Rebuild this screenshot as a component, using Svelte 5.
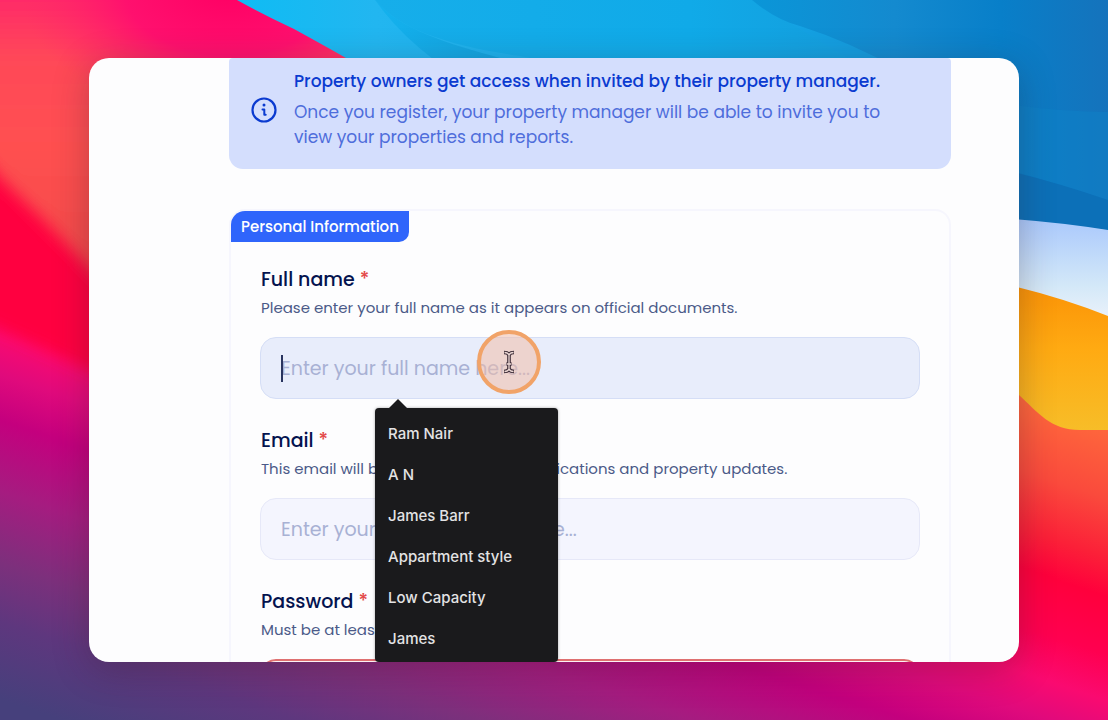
<script lang="ts">
	type Field = {
		id: string;
		type: string;
		label: string;
		hint: string;
		placeholder: string;
		invalid?: boolean;
	};

	const fields: Field[] = [
		{
			id: 'full-name',
			type: 'text',
			label: 'Full name',
			hint: 'Please enter your full name as it appears on official documents.',
			placeholder: 'Enter your full name here...'
		},
		{
			id: 'email',
			type: 'email',
			label: 'Email',
			hint: 'This email will be used for account notifications and property updates.',
			placeholder: 'Enter your email address here...'
		},
		{
			id: 'password',
			type: 'password',
			label: 'Password',
			hint: 'Must be at least 8 characters',
			placeholder: 'Enter your password here...',
			invalid: true
		}
	];

	const suggestions = ['Ram Nair', 'A N', 'James Barr', 'Appartment style', 'Low Capacity', 'James'];

	let values = $state<Record<string, string>>({ 'full-name': '', email: '', password: '' });
	let active = $state('full-name');

	function pick(name: string) {
		values['full-name'] = name;
		active = '';
	}
</script>

<div class="stage">
	<svg class="wallpaper" viewBox="0 0 1108 720" preserveAspectRatio="none" aria-hidden="true">
		<defs>
			<linearGradient id="base" gradientUnits="userSpaceOnUse" x1="0" y1="50" x2="-193" y2="636">
				<stop offset="0" stop-color="#ff6c3c" />
				<stop offset="0.13" stop-color="#fa4a3c" />
				<stop offset="0.22" stop-color="#fb2038" />
				<stop offset="0.28" stop-color="#ff003c" />
				<stop offset="0.37" stop-color="#ff0050" />
				<stop offset="0.44" stop-color="#fa0a70" />
				<stop offset="0.5" stop-color="#e00a7c" />
				<stop offset="0.57" stop-color="#c4007e" />
				<stop offset="0.68" stop-color="#a51c80" />
				<stop offset="0.79" stop-color="#7c307c" />
				<stop offset="0.88" stop-color="#5e377e" />
				<stop offset="1" stop-color="#46407c" />
			</linearGradient>
			<linearGradient id="coral" gradientUnits="userSpaceOnUse" x1="0" y1="0" x2="0" y2="290">
				<stop offset="0" stop-color="#ff2a68" />
				<stop offset="0.2" stop-color="#ff4858" />
				<stop offset="0.5" stop-color="#ff5050" />
				<stop offset="1" stop-color="#f04848" />
			</linearGradient>
			<radialGradient id="pink" gradientUnits="userSpaceOnUse" cx="0" cy="0" r="1" gradientTransform="translate(230 -10) scale(210 130)">
				<stop offset="0" stop-color="#ff0064" />
				<stop offset="0.5" stop-color="#ff106e" />
				<stop offset="1" stop-color="#ff2a68" stop-opacity="0" />
			</radialGradient>
			<linearGradient id="blue" x1="0" y1="0" x2="1" y2="0">
				<stop offset="0" stop-color="#0fbcf4" />
				<stop offset="0.16" stop-color="#22b6f0" />
				<stop offset="0.6" stop-color="#14a6e6" />
				<stop offset="1" stop-color="#1480c8" />
			</linearGradient>
			<linearGradient id="blue-mid" x1="0" y1="0" x2="1" y2="0">
				<stop offset="0" stop-color="#16aeea" />
				<stop offset="0.6" stop-color="#10aae8" />
				<stop offset="1" stop-color="#169ada" />
			</linearGradient>
			<linearGradient id="blue-fold" x1="0" y1="0" x2="1" y2="0">
				<stop offset="0" stop-color="#14b2ee" />
				<stop offset="0.6" stop-color="#129cd8" />
				<stop offset="1" stop-color="#1098d6" />
			</linearGradient>
			<linearGradient id="blue-deep" x1="0" y1="0" x2="1" y2="0">
				<stop offset="0" stop-color="#0a96d8" />
				<stop offset="0.4" stop-color="#148acf" />
				<stop offset="0.7" stop-color="#087fc9" />
				<stop offset="1" stop-color="#1573bc" />
			</linearGradient>
			<linearGradient id="sky" x1="0" y1="0" x2="0" y2="1">
				<stop offset="0" stop-color="#a9c8fc" />
				<stop offset="0.6" stop-color="#d3e8f8" />
				<stop offset="1" stop-color="#f2f5fb" />
			</linearGradient>
			<linearGradient id="amber" x1="0" y1="0" x2="0" y2="1">
				<stop offset="0" stop-color="#fb9206" />
				<stop offset="0.45" stop-color="#ffaa12" />
				<stop offset="1" stop-color="#f7bd28" />
			</linearGradient>
			<filter id="soft" x="-50%" y="-50%" width="200%" height="200%">
				<feGaussianBlur stdDeviation="8" />
			</filter>
		</defs>

		<rect width="1108" height="720" fill="url(#base)" />
		<path d="M-60 100 H60 L200 300 V420 L89 370 L-60 300Z" fill="#ff0040" filter="url(#soft)" />
		<path d="M-100 -100 H500 V330 H150 L89 268 L45 222 L0 178 Q-40 130 -100 60Z" fill="url(#coral)" filter="url(#soft)" />
		<rect width="460" height="130" fill="url(#pink)" />

		<path d="M237 0 Q262 14 294 29 Q325 46 346 58 L366 70 L1019 220 L1108 230 V0Z" fill="url(#blue)" />
		<path d="M375 0 C400 30 450 46 520 56 L680 90 H900 L752 0Z" fill="url(#blue-mid)" />
		<path d="M375 0 C400 30 450 44 500 58 Q540 61 575 64 Q620 72 660 90 H480 Q410 50 375 0Z" fill="url(#blue-fold)" />
		<path d="M752 0 Q776 20 800 26 Q850 42 900 70 L1019 220 L1108 230 V0Z" fill="url(#blue-deep)" />
		<path d="M1000 103 Q1060 112 1108 112 V204 Q1050 180 1000 168Z" fill="#0d82c8" opacity="0.5" />
		<path d="M1000 169 Q1050 180 1108 200 V230 L1000 220Z" fill="#0c70b8" />
		<path d="M1000 218 Q1060 222 1108 230 V330 H1000Z" fill="url(#sky)" />
		<path d="M1000 283 Q1058 296 1108 316 V430 H1080 C1050 430 1038 412 1019 395 L1000 378Z" fill="url(#amber)" />
	</svg>

	<main class="window">
		<div class="content">
			<div class="notice">
				<svg class="info" viewBox="0 0 26 26" aria-hidden="true">
					<circle cx="13" cy="13" r="11.5" fill="none" stroke="#0b3bd0" stroke-width="2.2" />
					<circle cx="13" cy="8" r="1.5" fill="#0b3bd0" />
					<path d="M11.5 12.4h1.8v5M13.3 17.8h1.4" fill="none" stroke="#0b3bd0" stroke-width="2" stroke-linecap="round" stroke-linejoin="round" />
				</svg>
				<div>
					<strong>Property owners get access when invited by their property manager.</strong>
					<p>Once you register, your property manager will be able to invite you to view your properties and reports.</p>
				</div>
			</div>

			<form class="panel">
				<h2>Personal Information</h2>
				{#each fields as field}
					<div class="field">
						<label for={field.id}>{field.label} <span class="required">*</span></label>
						<p class="hint" id="{field.id}-hint">{field.hint}</p>
						<div class="control">
							<input
								id={field.id}
								type={field.type}
								class:active={active === field.id}
								class:invalid={field.invalid}
								placeholder={field.placeholder}
								aria-describedby="{field.id}-hint"
								autocomplete="off"
								bind:value={values[field.id]}
								onfocus={() => (active = field.id)}
							/>
							{#if field.id === 'full-name' && active === field.id}
								<span class="caret"></span>
								<div class="pointer">
									<svg viewBox="0 0 14 24" aria-hidden="true">
										<path d="M2 2.5Q6 2.5 7 5Q8 2.5 12 2.5M7 5V19M2 21.5Q6 21.5 7 19Q8 21.5 12 21.5M4.5 14H9.5" fill="none" stroke="#3a2a35" stroke-width="3.6" />
										<path d="M2.5 2.5Q6 2.5 7 5Q8 2.5 11.5 2.5M7 5V19M2.5 21.5Q6 21.5 7 19Q8 21.5 11.5 21.5M5 14H9" fill="none" stroke="#eed9d6" stroke-width="1.3" />
									</svg>
								</div>
								<ul class="suggestions">
									{#each suggestions as name}
										<li><button type="button" onclick={() => pick(name)}>{name}</button></li>
									{/each}
								</ul>
							{/if}
						</div>
					</div>
				{/each}
			</form>
		</div>
	</main>
</div>

<style>
	:global(body) {
		margin: 0;
	}
	.stage {
		position: relative;
		box-sizing: border-box;
		height: 100vh;
		padding: 58px 89px;
		overflow: hidden;
		font-family: Poppins, 'Inter', sans-serif;
	}
	.wallpaper {
		position: absolute;
		inset: 0;
		width: 100%;
		height: 100%;
	}
	.window {
		position: relative;
		height: 100%;
		overflow: hidden;
		background: #fdfdfe;
		border-radius: 20px;
		box-shadow: 0 8px 36px rgba(50, 30, 40, 0.3);
	}
	.content {
		padding: 0 68px 0 140px;
	}
	.notice {
		display: flex;
		align-items: center;
		gap: 17px;
		padding: 11px 48px 19px 22px;
		background: #d4defd;
		border-radius: 4px 4px 14px 14px;
		font-size: 17px;
		line-height: 25px;
	}
	.info {
		flex: none;
		width: 26px;
		height: 26px;
	}
	.notice strong {
		display: block;
		margin-bottom: 6px;
		font-weight: 500;
		color: #0b3bd0;
	}
	.notice p {
		margin: 0;
		color: #4e6ddb;
	}
	.panel {
		margin-top: 40px;
		border: 2px solid #f6f6fd;
		border-radius: 16px;
	}
	h2 {
		width: fit-content;
		margin: 0 0 24px;
		padding: 0 10px;
		border-radius: 14px 0 10px 0;
		background: #2f65fb;
		color: #fff;
		font-size: 15px;
		font-weight: 500;
		line-height: 31px;
	}
	.field {
		margin: 0 29px 28px;
	}
	label {
		display: block;
		padding: 0 1px;
		color: #04134f;
		font-size: 19px;
		font-weight: 500;
		line-height: 28px;
	}
	.required {
		color: #e34848;
	}
	.hint {
		margin: 2px 0 17px;
		padding: 0 1px;
		color: #4b5a88;
		font-size: 15px;
		line-height: 24px;
	}
	.control {
		position: relative;
	}
	input {
		display: block;
		box-sizing: border-box;
		width: 100%;
		height: 62px;
		padding: 0 20px;
		border: 1px solid #e6e8f8;
		border-radius: 16px;
		outline: none;
		background: #f4f5fe;
		color: #04134f;
		font-family: inherit;
		font-size: 19px;
	}
	input.active {
		border-color: #d5def6;
		background: #e8edfb;
	}
	input.invalid {
		border: 2px solid #df7070;
		background: #fdf1f3;
	}
	input::placeholder {
		color: #a8b1d4;
		opacity: 1;
	}
	.caret {
		position: absolute;
		top: 18px;
		left: 21px;
		width: 2px;
		height: 27px;
		background: #28345f;
	}
	.pointer {
		position: absolute;
		z-index: 3;
		top: -7px;
		left: 217px;
		display: flex;
		align-items: center;
		justify-content: center;
		box-sizing: border-box;
		width: 64px;
		height: 64px;
		border: 4px solid #f1a368;
		border-radius: 50%;
		background: rgba(240, 190, 170, 0.55);
		pointer-events: none;
	}
	.pointer svg {
		width: 14px;
		height: 24px;
	}
	.suggestions {
		position: absolute;
		z-index: 2;
		top: 71px;
		left: 115px;
		box-sizing: border-box;
		width: 183px;
		margin: 0;
		padding: 5px 0 3px;
		border-radius: 4px;
		background: #1a1a1c;
		box-shadow: 0 0 3px rgba(0, 0, 0, 0.35);
		list-style: none;
	}
	.suggestions::before {
		content: '';
		position: absolute;
		top: -9px;
		left: 14px;
		border: 9px solid transparent;
		border-top: 0;
		border-bottom-color: #1a1a1c;
	}
	.suggestions button {
		display: block;
		width: 100%;
		padding: 0 13px;
		border: 0;
		background: none;
		color: #e3e3e4;
		font-family: 'Inter', sans-serif;
		font-size: 15px;
		font-weight: 500;
		line-height: 41px;
		text-align: left;
		cursor: pointer;
	}
	.suggestions button:hover {
		background: #2c2c30;
	}
</style>
